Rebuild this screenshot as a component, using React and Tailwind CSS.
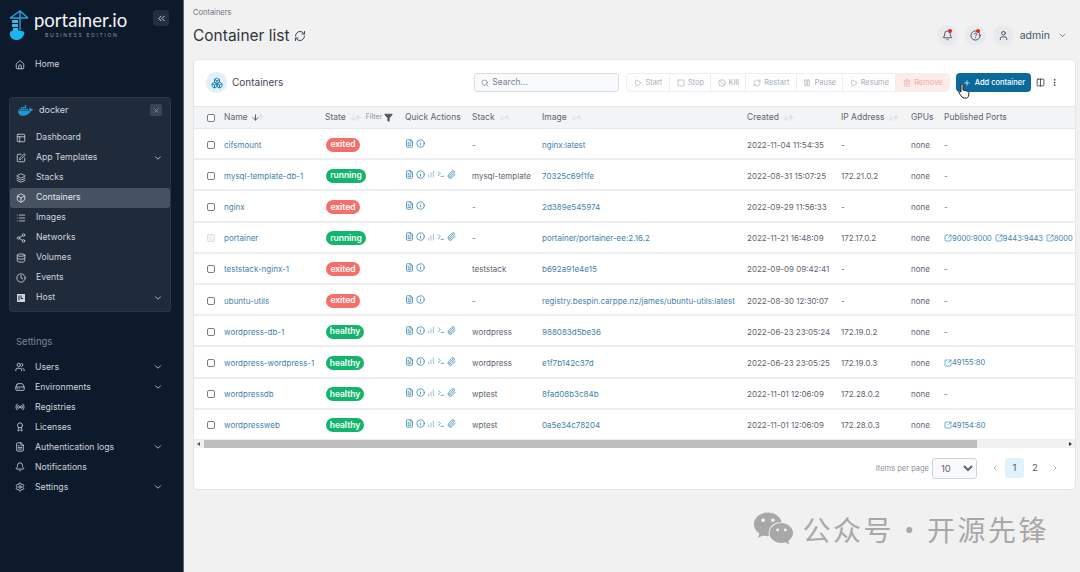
import {
  Home, PanelsTopLeft, SquarePen, Layers, Box, List, Share2, Database, Clock, HardDrive, ChevronDown,
  Users, Radio, Award, FileText, Bell, Settings, X, ChevronsLeft, RefreshCw, Boxes, Search, Play, Square,
  Ban, Pause, Trash2, Plus, Columns2, EllipsisVertical, ArrowDown, ArrowUp, Info, ChartNoAxesColumnIncreasing,
  Terminal, Paperclip, SquareArrowOutUpRight, CircleHelp, User, ChevronLeft, ChevronRight, Filter,
} from "lucide-react";
import { FaDocker, FaWeixin } from "react-icons/fa";

const HostIcon = ({ size, className }) => (
  <svg width={size} height={size} viewBox="0 0 10 10" className={className}>
    <path d="M1 1h8v8H1z" fill="currentColor" />
    <path d="M5 2.5v3h2M3 2.5v5" fill="none" stroke="#1f2a3a" strokeWidth="1" />
  </svg>
);

const envItems = [
  { label: "Dashboard", icon: PanelsTopLeft },
  { label: "App Templates", icon: SquarePen, more: true },
  { label: "Stacks", icon: Layers },
  { label: "Containers", icon: Box, active: true },
  { label: "Images", icon: List },
  { label: "Networks", icon: Share2 },
  { label: "Volumes", icon: Database },
  { label: "Events", icon: Clock },
  { label: "Host", icon: HostIcon, more: true },
];

const settingItems = [
  { label: "Users", icon: Users, more: true },
  { label: "Environments", icon: HardDrive, more: true },
  { label: "Registries", icon: Radio },
  { label: "Licenses", icon: Award },
  { label: "Authentication logs", icon: FileText, more: true },
  { label: "Notifications", icon: Bell },
  { label: "Settings", icon: Settings, more: true },
];

const rows = [
  { name: "cifsmount", state: "exited", stack: "-", image: "nginx:latest", created: "2022-11-04 11:54:35", ip: "-", ports: [] },
  { name: "mysql-template-db-1", state: "running", stack: "mysql-template", image: "70325c69f1fe", created: "2022-08-31 15:07:25", ip: "172.21.0.2", ports: [] },
  { name: "nginx", state: "exited", stack: "-", image: "2d389e545974", created: "2022-09-29 11:56:33", ip: "-", ports: [] },
  { name: "portainer", state: "running", stack: "-", image: "portainer/portainer-ee:2.16.2", created: "2022-11-21 16:48:09", ip: "172.17.0.2", ports: ["9000:9000", "9443:9443", "8000:8000"], locked: true },
  { name: "teststack-nginx-1", state: "exited", stack: "teststack", image: "b692a91e4e15", created: "2022-09-09 09:42:41", ip: "-", ports: [] },
  { name: "ubuntu-utils", state: "exited", stack: "-", image: "registry.bespin.carppe.nz/james/ubuntu-utils:latest", created: "2022-08-30 12:30:07", ip: "-", ports: [] },
  { name: "wordpress-db-1", state: "healthy", stack: "wordpress", image: "988083d5be36", created: "2022-06-23 23:05:24", ip: "172.19.0.2", ports: [] },
  { name: "wordpress-wordpress-1", state: "healthy", stack: "wordpress", image: "e1f7b142c37d", created: "2022-06-23 23:05:25", ip: "172.19.0.3", ports: ["49155:80"] },
  { name: "wordpressdb", state: "healthy", stack: "wptest", image: "8fad08b3c84b", created: "2022-11-01 12:06:09", ip: "172.28.0.2", ports: [] },
  { name: "wordpressweb", state: "healthy", stack: "wptest", image: "0a5e34c78204", created: "2022-11-01 12:06:09", ip: "172.28.0.3", ports: ["49154:80"] },
];

const cols = "grid grid-cols-[30px_101px_80px_67px_70px_205px_94px_70px_33px_129px] items-center";

const SideRow = ({ item, active }) => {
  const Icon = item.icon;
  return (
    <div className={`flex h-5 items-center rounded-[3px] ${active ? "bg-[#465262] text-[#e4e8ee]" : ""}`}>
      <Icon size={10} strokeWidth={2} className="ml-[6px] w-[10px] shrink-0" />
      <span className="ml-[10px] flex-1">{item.label}</span>
      {item.more && <ChevronDown size={10} className="mr-[7px]" />}
    </div>
  );
};

const Logo = () => (
  <svg width="20" height="30" viewBox="0 0 20 30">
    <path d="M1 8 L11 1 L19 8 M11 1 V20 M1 8 H19" fill="none" stroke="#20a4dc" strokeWidth="1.4" />
    <path d="M3 10h6v3H3zM3 14h6v3H3zM4 18h5v3H4z" fill="#3fb5e6" />
    <path d="M1 22c2-2 4-1 5-1 1-1 5-1 6 0 3 0 4 1 3 3-1 4-4 6-8 6-4 0-7-4-6-8z" fill="#19b5f1" />
  </svg>
);

const Sidebar = () => (
  <aside className="flex h-[572px] w-[184px] shrink-0 flex-col border-r border-[#5d6168] bg-[#0d1a2b] text-[8.7px] text-[#cfd5dd]">
    <div className="flex h-[47px] pl-[9px] pr-[14px] pt-[10px]">
      <Logo />
      <div className="ml-[5px] flex flex-col items-start">
        <span className="-mt-[1px] font-['Lato',sans-serif] text-[18.5px] leading-[23px] text-[#f4f6f8]">portainer.io</span>
        <span className="ml-[11px] text-[5px] leading-[6px] tracking-[1.7px] text-[#8d97a5]">BUSINESS EDITION</span>
      </div>
      <div className="ml-auto flex h-4 w-4 items-center justify-center rounded-[3px] bg-[#232f40]">
        <ChevronsLeft size={11} className="text-[#d5dae2]" />
      </div>
    </div>
    <div className="mt-[8px] pl-[9px] pr-[13px]">
      <SideRow item={{ label: "Home", icon: Home }} />
    </div>
    <div className="ml-[9px] mr-[12px] mt-[22px] rounded-[3px] border border-[#2a3645] bg-[#1f2a3a] pb-[3px]">
      <div className="flex h-[30px] items-center px-[8px] pb-[6px]">
        <FaDocker size={15} className="text-[#2496d8]" />
        <span className="ml-[6px] flex-1 text-[9px] text-[#d2d8e0]">docker</span>
        <div className="flex h-3 w-3 items-center justify-center rounded-[2px] bg-[#3a4658]">
          <X size={7} className="text-[#a8b1bd]" />
        </div>
      </div>
      <div>
        {envItems.map((item) => (
          <SideRow key={item.label} item={item} active={item.active} />
        ))}
      </div>
    </div>
    <div className="mt-[23px] pl-[16px] text-[9.5px] text-[#7d8794]">Settings</div>
    <div className="mt-[8px] pl-[9px] pr-[13px]">
      {settingItems.map((item) => (
        <SideRow key={item.label} item={item} />
      ))}
    </div>
  </aside>
);

const CircleBtn = ({ children, dot }) => (
  <div className="relative flex h-[21px] w-[21px] items-center justify-center rounded-full bg-[#e9eaee] text-[#3f4653]">
    {children}
    {dot && <span className="absolute right-[6px] top-[4px] h-[4px] w-[4px] rounded-full bg-[#e8262a]" />}
  </div>
);

const toolbar = [
  { label: "Start", icon: Play, w: "w-[43px]" },
  { label: "Stop", icon: Square, w: "w-[41px]" },
  { label: "Kill", icon: Ban, w: "w-[35px]" },
  { label: "Restart", icon: RefreshCw, w: "w-[51px]" },
  { label: "Pause", icon: Pause, w: "w-[46px]" },
  { label: "Resume", icon: Play, w: "w-[53px]" },
];

const SortIcon = ({ on }) => (
  <span className="ml-[3px] flex">
    <ArrowDown size={on ? 9 : 8} strokeWidth={on ? 2.5 : 1.5} className={on ? "text-[#4b5563]" : "text-[#c9ced6]"} />
    <ArrowUp size={8} className="-ml-[3px] text-[#c9ced6]" />
  </span>
);

const badge = {
  exited: "bg-[#f56f6a] w-[34px]",
  running: "bg-[#12b56b] w-[40px]",
  healthy: "bg-[#12b56b] w-[38px]",
};

const Actions = ({ row }) => {
  const c = "text-[#2f7fa8]";
  return (
    <div className="-mt-[3px] flex items-center gap-[2px]">
      <FileText size={9} className={c} />
      <Info size={9} className={c} />
      {row.state !== "exited" && (
        <>
          <ChartNoAxesColumnIncreasing size={8} className="text-[#6aa5c4]" />
          <Terminal size={8} className={c} />
          <Paperclip size={9} className={c} />
        </>
      )}
    </div>
  );
};

const ContainerRow = ({ row }) => (
  <div className={`${cols} h-[31.2px] border-b-2 border-[#eceef1] pt-[2px] text-[8px] text-[#5f6570]`}>
    <div className="pl-[13px]">
      <div className={`h-2 w-2 rounded-[2px] border ${row.locked ? "border-[#dcdfe4] bg-[#f1f2f4]" : "border-[#777d87] bg-white"}`} />
    </div>
    <span className="whitespace-nowrap text-[#4383a8]">{row.name}</span>
    <div>
      <span className={`ml-[1px] flex h-[14px] items-center justify-center rounded-full text-[8.5px] font-semibold text-white ${badge[row.state]}`}>
        {row.state}
      </span>
    </div>
    <Actions row={row} />
    <span className="whitespace-nowrap">{row.stack}</span>
    <span className="whitespace-nowrap text-[#4383a8]">{row.image}</span>
    <span className="whitespace-nowrap">{row.created}</span>
    <span>{row.ip}</span>
    <span>none</span>
    <div className="flex gap-[3px] overflow-hidden whitespace-nowrap text-[7.5px] text-[#4383a8]">
      {row.ports.length === 0 && <span className="text-[8px] text-[#5f6570]">-</span>}
      {row.ports.map((p) => (
        <span key={p} className="flex items-center">
          <SquareArrowOutUpRight size={8} className="shrink-0 text-[#2b86bd]" />
          {p}
        </span>
      ))}
    </div>
  </div>
);

export default function App() {
  return (
    <div className="flex h-[572px] w-[1080px] overflow-hidden bg-[#f1f1f2] font-['Inter',sans-serif]">
      <Sidebar />
      <main className="flex min-w-0 flex-1 flex-col pl-[9px] pr-[4px]">
        <div className="flex h-[59px] items-start">
          <div>
            <div className="mt-[8px] text-[7.5px] leading-[9px] text-[#6b7280]">Containers</div>
            <div className="mt-[9px] flex items-center text-[15.5px] leading-[20px] text-[#30343b]">
              Container list
              <RefreshCw size={12} className="ml-[4px] text-[#3f4653]" />
            </div>
          </div>
          <div className="ml-auto mr-[9px] mt-[25px] flex items-center gap-[7px]">
            <CircleBtn dot><Bell size={11} /></CircleBtn>
            <CircleBtn dot><CircleHelp size={11} /></CircleBtn>
            <CircleBtn><User size={11} /></CircleBtn>
            <span className="ml-[-1px] text-[10.5px] text-[#4b5563]">admin</span>
            <ChevronDown size={9} className="ml-[1px] text-[#4b5563]" />
          </div>
        </div>

        <section className="h-[431px] overflow-hidden rounded-[5px] border border-[#e4e6ea] bg-white">
          <div className="relative flex h-[46px] items-center pb-[1px] pl-[12px]">
            <div className="flex h-[21px] w-[21px] items-center justify-center rounded-full bg-[#dff1fb]">
              <Boxes size={12} className="text-[#1f7fb0]" />
            </div>
            <span className="ml-[5px] text-[10px] text-[#3f4653]">Containers</span>
            <div className="ml-[191px] flex h-[19px] w-[145px] items-center rounded-[3px] border border-[#d9dde3] bg-[#f8fafb] pl-[6px] text-[8.5px] text-[#7a818c]">
              <Search size={8} />
              <span className="ml-[3px]">Search...</span>
            </div>
            <div className="ml-[7px] flex h-[19px] overflow-hidden rounded-[4px] border border-[#eceef1] text-[7.5px] text-[#a9afb8]">
              {toolbar.map((b) => (
                <div key={b.label} className={`flex items-center justify-center gap-[3px] border-r border-[#eceef1] ${b.w}`}>
                  <b.icon size={8} />
                  {b.label}
                </div>
              ))}
              <div className="flex w-[53px] items-center justify-center gap-[3px] bg-[#fdecea] text-[#f0a8a3]">
                <Trash2 size={8} />
                Remove
              </div>
            </div>
            <div className="ml-[6px] flex h-[19px] w-[75px] items-center justify-center gap-[4px] rounded-[4px] bg-[#0b6a9a] text-[7.5px] font-medium text-white">
              <Plus size={8} />
              Add container
            </div>
            <Columns2 size={9} className="ml-[5px] text-[#1f2937]" />
            <EllipsisVertical size={9} className="ml-[5px] text-[#1f2937]" />
            <svg width="12" height="16" viewBox="0 0 12 16" className="absolute left-[764px] top-[23px]">
              <path d="M3 1.5c1-.6 2 0 2 1V7l4 1c1 .3 2 1 2 2l-.5 3c-.2 1-1 2-2 2H6c-1 0-1.5-.5-2-1L1 10c-.5-1 .7-2 2-1V2z" fill="#fff" stroke="#222" strokeWidth="1" />
            </svg>
          </div>

          <div className={`${cols} h-[23px] border-y border-[#e4e6ea] bg-[#f3f4f6] text-[8.5px] text-[#5f6570]`}>
            <div className="pl-[13px]">
              <div className="h-2 w-2 rounded-[2px] border border-[#777d87] bg-white" />
            </div>
            <span className="flex items-center">Name<SortIcon on /></span>
            <span className="flex items-center whitespace-nowrap">
              State<SortIcon />
              <span className="ml-[4px] text-[7px] text-[#8a909a]">Filter</span>
              <Filter size={9} fill="#4b5563" className="ml-[2px] text-[#4b5563]" />
            </span>
            <span className="whitespace-nowrap">Quick Actions</span>
            <span className="flex items-center">Stack<SortIcon /></span>
            <span className="flex items-center">Image<SortIcon /></span>
            <span className="flex items-center">Created<SortIcon /></span>
            <span className="flex items-center whitespace-nowrap">IP Address<SortIcon /></span>
            <span>GPUs</span>
            <span className="whitespace-nowrap">Published Ports</span>
          </div>

          {rows.map((row) => (
            <ContainerRow key={row.name} row={row} />
          ))}

          <div className="-mt-[1px] flex h-[8px] items-center bg-[#f1f1f1]">
            <span className="ml-[3px] h-0 w-0 border-y-[2.5px] border-r-[3px] border-y-transparent border-r-[#555]" />
            <div className="ml-[4px] h-full w-[773px] bg-[#bebebe]" />
            <span className="ml-auto mr-[3px] h-0 w-0 border-y-[2.5px] border-l-[3px] border-y-transparent border-l-[#333]" />
          </div>

          <div className="flex h-[40px] items-center justify-end pr-[16px] pt-[1px]">
            <span className="text-[7.5px] text-[#8a909a]">Items per page</span>
            <select defaultValue="10" className="ml-[3px] h-[21px] w-[45px] rounded-[3px] border border-[#cfd4db] bg-[#f8fafb] pl-[4px] text-[9.5px] text-[#5f6570]">
              <option>10</option>
            </select>
            <ChevronLeft size={8} className="ml-[14px] text-[#8a909a]" />
            <span className="ml-[6px] flex h-5 w-[19px] items-center justify-center rounded-[3px] bg-[#e0f2fe] text-[9.5px] text-[#4b5563]">1</span>
            <span className="ml-[7px] w-[8px] text-center text-[9.5px] text-[#4b5563]">2</span>
            <ChevronRight size={8} className="ml-[12px] text-[#8a909a]" />
          </div>
        </section>

        <div className="mr-[27px] mt-[18px] flex items-center justify-end font-['Noto_Sans_CJK_SC',sans-serif] text-[#a8a8a8]">
          <FaWeixin size={41} />
          <span className="ml-[8px] whitespace-nowrap text-[28px] leading-[36px] tracking-[2.5px] [word-spacing:-7.5px]">公众号 · 开源先锋</span>
        </div>
      </main>
    </div>
  );
}
